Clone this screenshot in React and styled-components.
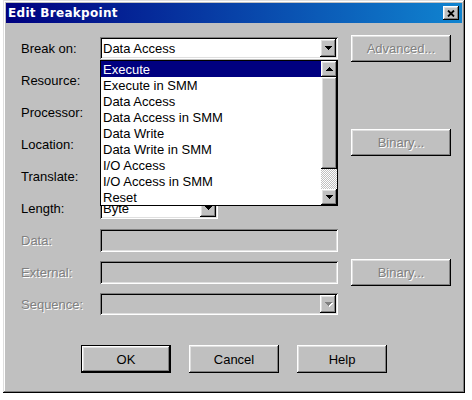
import React from 'react'
import styled, { createGlobalStyle } from 'styled-components'

const GlobalStyle = createGlobalStyle`
  html, body {
    margin: 0;
    padding: 0;
    background: #fff;
  }
  body {
    font-family: "Liberation Sans", Arial, sans-serif;
    font-size: 13px;
    color: #000;
  }
`

const raised = `
  box-shadow: inset -1px -1px #000, inset 1px 1px #fff,
    inset -2px -2px #808080, inset 2px 2px #dfdfdf;
`

const sunken = `
  box-shadow: inset 1px 1px #808080, inset -1px -1px #fff,
    inset 2px 2px #000, inset -2px -2px #dfdfdf;
`

const disabledText = `
  color: #808080;
  text-shadow: 1px 1px 0 #fff;
`

const breakOptions = [
    'Execute',
    'Execute in SMM',
    'Data Access',
    'Data Access in SMM',
    'Data Write',
    'Data Write in SMM',
    'I/O Access',
    'I/O Access in SMM',
    'Reset',
]

function Arrow({ up, disabled }) {
    return (
        <svg width="7" height="4" viewBox="0 0 7 4" shapeRendering="crispEdges"
            style={{ transform: up ? 'rotate(180deg)' : 'none', overflow: 'visible' }}>
            {disabled && <path d="M1 1h7L4.5 5z" fill="#fff" />}
            <path d="M0 0h7L3.5 4z" fill={disabled ? '#808080' : '#000'} />
        </svg>
    )
}

function Combo({ width, value, disabled, children }) {
    return (
        <ComboBox $width={width} $disabled={disabled}>
            <ComboValue>{value}</ComboValue>
            <ArrowButton>
                <Arrow disabled={disabled} />
            </ArrowButton>
            {children}
        </ComboBox>
    )
}

function App() {
    return (
        <>
            <GlobalStyle />
            <Window>
                <TitleBar>
                    <Title>Edit Breakpoint</Title>
                    <CloseButton>
                        <svg width="8" height="7" viewBox="0 0 8 7">
                            <path d="M1 0.5L7 6.5M7 0.5L1 6.5" stroke="#000" strokeWidth="1.8" />
                        </svg>
                    </CloseButton>
                </TitleBar>

                <Form>
                    <Label>Break on:</Label>
                    <Combo width={238} value="Data Access">
                        <DropList>
                            <Items>
                                {breakOptions.map((opt, i) => (
                                    <Item key={opt} $selected={i === 0}>{opt}</Item>
                                ))}
                            </Items>
                            <ScrollBar>
                                <ScrollButton><Arrow up /></ScrollButton>
                                <Thumb />
                                <Track />
                                <ScrollButton><Arrow /></ScrollButton>
                            </ScrollBar>
                        </DropList>
                    </Combo>
                    <Button disabled>Advanced...</Button>

                    <Label>Resource:</Label>
                    <Combo width={238} value="" />
                    <span />

                    <Label>Processor:</Label>
                    <Combo width={238} value="" />
                    <span />

                    <Label>Location:</Label>
                    <TextBox />
                    <Button disabled $shift={-2}>Binary...</Button>

                    <Label>Translate:</Label>
                    <Combo width={238} value="" />
                    <span />

                    <Label>Length:</Label>
                    <Combo width={118} value="Byte" />
                    <span />

                    <Label $disabled>Data:</Label>
                    <TextBox $disabled />
                    <span />

                    <Label $disabled>External:</Label>
                    <TextBox $disabled />
                    <Button disabled>Binary...</Button>

                    <Label $disabled>Sequence:</Label>
                    <Combo width={238} value="" disabled />
                    <span />
                </Form>

                <Footer>
                    <Button $wide $default>OK</Button>
                    <Button $wide>Cancel</Button>
                    <Button $wide>Help</Button>
                </Footer>
            </Window>
        </>
    )
}

export default App

const Window = styled.div`
    margin-left: 3px;
    width: 462px;
    height: 393px;
    box-sizing: border-box;
    padding: 3px;
    background: #c0c0c0;
    box-shadow: inset -1px -1px #000, inset 1px 1px #dfdfdf,
        inset -2px -2px #808080, inset 2px 2px #fff;
    display: flex;
    flex-direction: column;
`

const TitleBar = styled.div`
    height: 20px;
    display: flex;
    align-items: center;
    justify-content: space-between;
    padding: 0 3px 0 2px;
    background: linear-gradient(90deg, #000080, #1084d0);
`

const Title = styled.div`
    color: #fff;
    font-family: "DejaVu Sans", Verdana, sans-serif;
    font-weight: bold;
    font-size: 12px;
    letter-spacing: 0.3px;
`

const CloseButton = styled.div`
    width: 16px;
    height: 14px;
    background: #c0c0c0;
    ${raised}
    display: flex;
    align-items: center;
    justify-content: center;
`

const Form = styled.div`
    display: grid;
    grid-template-columns: 79px 238px 113px;
    grid-auto-rows: 32px;
    align-items: center;
    padding: 9px 0 0 15px;
`

const Label = styled.div`
    ${p => p.$disabled && disabledText}
`

const ComboBox = styled.div`
    position: relative;
    width: ${p => p.$width}px;
    height: 22px;
    box-sizing: border-box;
    padding: 2px;
    display: flex;
    align-items: center;
    background: ${p => (p.$disabled ? '#c0c0c0' : '#fff')};
    ${sunken}
`

const ComboValue = styled.div`
    flex: 1;
    padding-left: 1px;
    white-space: nowrap;
    overflow: hidden;
`

const ArrowButton = styled.div`
    width: 16px;
    height: 18px;
    flex: none;
    background: #c0c0c0;
    ${raised}
    display: flex;
    align-items: center;
    justify-content: center;
`

const DropList = styled.div`
    position: absolute;
    top: calc(100% + 1px);
    left: 0;
    z-index: 10;
    width: 238px;
    box-sizing: border-box;
    border: 1px solid #000;
    background: #fff;
    display: flex;
`

const Items = styled.div`
    flex: 1;
    display: flex;
    flex-direction: column;
`

const Item = styled.div`
    height: 16px;
    line-height: 17px;
    padding-left: 2px;
    white-space: nowrap;
    background: ${p => (p.$selected ? '#000080' : 'transparent')};
    color: ${p => (p.$selected ? '#fff' : '#000')};
`

const ScrollBar = styled.div`
    width: 16px;
    display: flex;
    flex-direction: column;
`

const ScrollButton = styled.div`
    height: 16px;
    background: #c0c0c0;
    ${raised}
    display: flex;
    align-items: center;
    justify-content: center;
`

const Thumb = styled.div`
    height: 92px;
    background: #c0c0c0;
    ${raised}
`

const Track = styled.div`
    flex: 1;
    background: repeating-conic-gradient(#c0c0c0 0 25%, #fff 0 50%) 0 0 / 2px 2px;
`

const TextBox = styled.div`
    width: 238px;
    height: 23px;
    box-sizing: border-box;
    background: ${p => (p.$disabled ? '#c0c0c0' : '#fff')};
    ${sunken}
`

const Button = styled.button`
    width: ${p => (p.$wide ? 90 : 100)}px;
    height: ${p => (p.$wide ? 28 : 27)}px;
    margin-left: ${p => (p.$wide ? 0 : 13)}px;
    margin-top: ${p => (p.$shift || 0) * 2}px;
    padding: 0;
    box-sizing: border-box;
    font-family: "Liberation Sans", Arial, sans-serif;
    font-size: 13px;
    color: #000;
    background: #c0c0c0;
    border: ${p => (p.$default ? '1px solid #000' : 'none')};
    ${raised}
    &:disabled {
        ${disabledText}
    }
`

const Footer = styled.div`
    display: flex;
    justify-content: center;
    gap: 18px;
    margin-top: 25px;
`
